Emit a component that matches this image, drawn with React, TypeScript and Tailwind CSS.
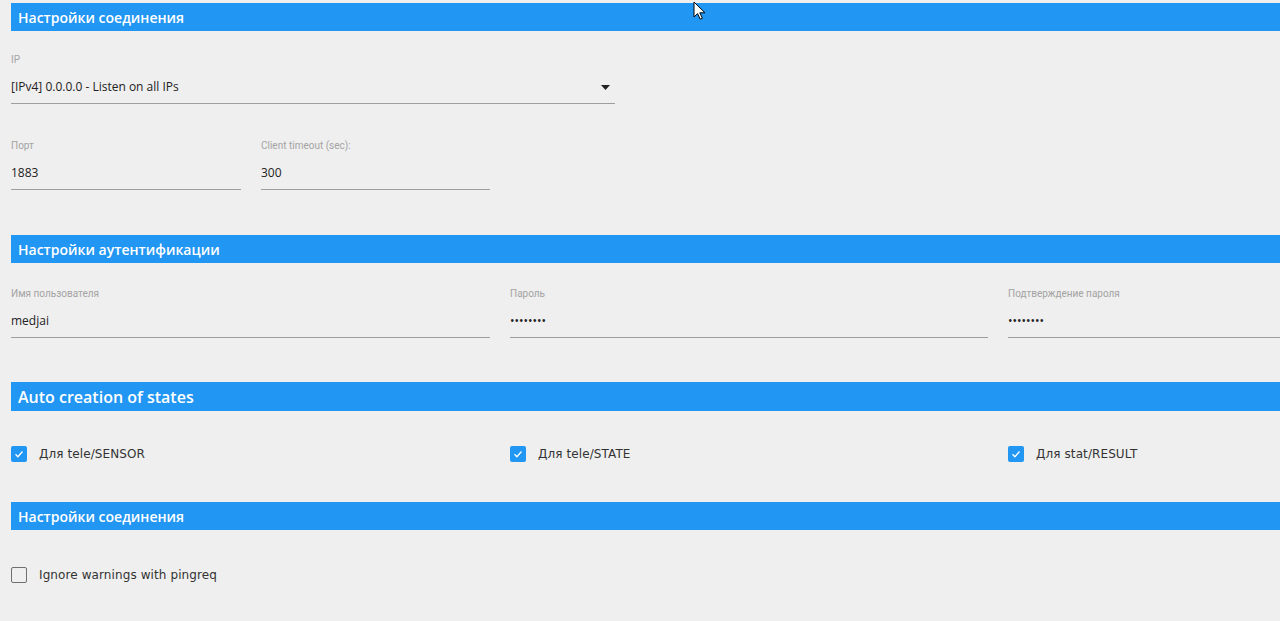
import React from "react"

const labelFont = { fontFamily: "Roboto, 'Noto Sans', sans-serif" }
const valueFont = { fontFamily: "'Open Sans', 'Noto Sans', sans-serif" }

function SectionHeader({ title, big }: { title: string; big?: boolean }) {
  return (
    <div
      className={`bg-[#2196f3] text-white flex items-center pl-[7px] ${big ? "h-[29px] text-[16px] font-semibold" : "h-[28px] text-[14px] font-semibold"}`}
      style={valueFont}
    >
      {title}
    </div>
  )
}

function Field({ label, value, width, select }: { label: string; value: string; width: string; select?: boolean }) {
  return (
    <div className={`${width} shrink-0`}>
      <div className="h-[12px] text-[10px] leading-[12px] text-[#a3a3a3]" style={labelFont}>
        {label}
      </div>
      <div className="mt-[11px] h-[20px] flex items-center justify-between text-[12px] text-[#222]" style={valueFont}>
        <span>{value}</span>
        {select && (
          <svg width="9" height="5" viewBox="0 0 9 5" className="mr-[5px]">
            <path d="M0 0h9L4.5 5z" fill="#222" />
          </svg>
        )}
      </div>
      <div className="mt-[6px] border-b border-[#9e9e9e]" />
    </div>
  )
}

function Check({ label, checked }: { label: string; checked: boolean }) {
  return (
    <div className="flex items-center h-[16px]">
      {checked ? (
        <div className="w-[16px] h-[16px] shrink-0 rounded-[2px] bg-[#2196f3] flex items-center justify-center">
          <svg width="12" height="12" viewBox="0 0 12 12">
            <path d="M2.5 6.3l2.4 2.4 4.6-5.2" stroke="#fff" strokeWidth="1.3" fill="none" />
          </svg>
        </div>
      ) : (
        <div className="w-[16px] h-[16px] shrink-0 rounded-[2px] border-[1.5px] border-[#6f6f6f]" />
      )}
      <span className="ml-[12px] text-[12px] text-[#333] tracking-[0.1px]" style={{ fontFamily: "'DejaVu Sans', Verdana, sans-serif" }}>
        {label}
      </span>
    </div>
  )
}

export default function App() {
  return (
    <div className="relative w-[1280px] h-[621px] overflow-hidden bg-[#efefef]">
      <div className="pl-[11px] pt-[3px] w-[1600px]">
        <SectionHeader title="Настройки соединения" />

        <div className="mt-[23px]">
          <Field label="IP" value="[IPv4] 0.0.0.0 - Listen on all IPs" width="w-[604px]" select />
        </div>

        <div className="mt-[36px] flex gap-[20px]">
          <Field label="Порт" value="1883" width="w-[230px]" />
          <Field label="Client timeout (sec):" value="300" width="w-[229px]" />
        </div>

        <div className="mt-[45px]">
          <SectionHeader title="Настройки аутентификации" />
        </div>

        <div className="mt-[25px] flex gap-[20px]">
          <Field label="Имя пользователя" value="medjai" width="w-[479px]" />
          <Field label="Пароль" value="••••••••" width="w-[478px]" />
          <Field label="Подтверждение пароля" value="••••••••" width="w-[478px]" />
        </div>

        <div className="mt-[44px]">
          <SectionHeader title="Auto creation of states" big />
        </div>

        <div className="mt-[35px] flex">
          <div className="w-[499px] shrink-0">
            <Check label="Для tele/SENSOR" checked />
          </div>
          <div className="w-[498px] shrink-0">
            <Check label="Для tele/STATE" checked />
          </div>
          <div className="w-[478px] shrink-0">
            <Check label="Для stat/RESULT" checked />
          </div>
        </div>

        <div className="mt-[40px]">
          <SectionHeader title="Настройки соединения" />
        </div>

        <div className="mt-[37px]">
          <Check label="Ignore warnings with pingreq" checked={false} />
        </div>
      </div>

      <svg className="absolute left-[693px] top-[1px]" width="13" height="19" viewBox="0 0 13 19">
        <path d="M1 1v15l3.6-3.4 2.6 5.6 2.2-1-2.6-5.4H12z" fill="#fff" stroke="#000" strokeWidth="1" strokeLinejoin="round" />
      </svg>
    </div>
  )
}
